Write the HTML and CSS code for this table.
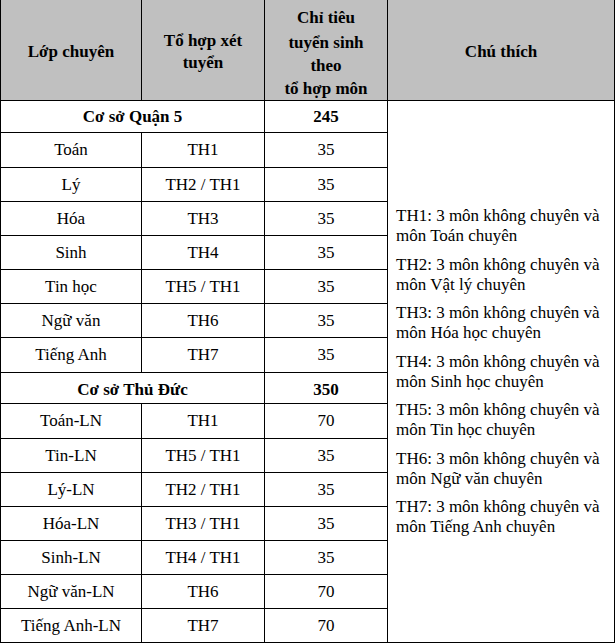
FILE: index.html
```html
<!DOCTYPE html>
<html lang="vi">
<head>
<meta charset="utf-8">
<link rel="stylesheet" href="styles.css">
</head>
<body>
<table class="quota">
  <colgroup>
    <col class="c1"><col class="c2"><col class="c3"><col class="c4">
  </colgroup>
  <thead>
    <tr class="head">
      <th>Lớp chuyên</th>
      <th>Tổ hợp xét<br>tuyển</th>
      <th class="multi"><span class="l">Chỉ tiêu</span><span class="l second">tuyển sinh</span><span class="l">theo</span><span class="l">tổ hợp môn</span></th>
      <th>Chú thích</th>
    </tr>
  </thead>
  <tbody>
    <tr class="group g1">
      <td colspan="2">Cơ sở Quận 5</td>
      <td>245</td>
      <td class="notes" rowspan="16">
        <p>TH1: 3 môn không chuyên và môn Toán chuyên</p>
        <p>TH2: 3 môn không chuyên và môn Vật lý chuyên</p>
        <p>TH3: 3 môn không chuyên và môn Hóa học chuyên</p>
        <p>TH4: 3 môn không chuyên và môn Sinh học chuyên</p>
        <p>TH5: 3 môn không chuyên và môn Tin học chuyên</p>
        <p>TH6: 3 môn không chuyên và môn Ngữ văn chuyên</p>
        <p>TH7: 3 môn không chuyên và môn Tiếng Anh chuyên</p>
      </td>
    </tr>
    <tr class="r35"><td>Toán</td><td>TH1</td><td>35</td></tr>
    <tr><td>Lý</td><td>TH2 / TH1</td><td>35</td></tr>
    <tr><td>Hóa</td><td>TH3</td><td>35</td></tr>
    <tr><td>Sinh</td><td>TH4</td><td>35</td></tr>
    <tr><td>Tin học</td><td>TH5 / TH1</td><td>35</td></tr>
    <tr><td>Ngữ văn</td><td>TH6</td><td>35</td></tr>
    <tr class="r35"><td>Tiếng Anh</td><td>TH7</td><td>35</td></tr>
    <tr class="group g2">
      <td colspan="2">Cơ sở Thủ Đức</td>
      <td>350</td>
    </tr>
    <tr class="r35"><td>Toán-LN</td><td>TH1</td><td>70</td></tr>
    <tr><td>Tin-LN</td><td>TH5 / TH1</td><td>35</td></tr>
    <tr><td>Lý-LN</td><td>TH2 / TH1</td><td>35</td></tr>
    <tr><td>Hóa-LN</td><td>TH3 / TH1</td><td>35</td></tr>
    <tr><td>Sinh-LN</td><td>TH4 / TH1</td><td>35</td></tr>
    <tr><td>Ngữ văn-LN</td><td>TH6</td><td>70</td></tr>
    <tr><td>Tiếng Anh-LN</td><td>TH7</td><td>70</td></tr>
  </tbody>
</table>
</body>
</html>
```

FILE: styles.css
```css
html, body {
  margin: 0;
  padding: 0;
  background: #ffffff;
}

body {
  font-family: "Liberation Serif", "Times New Roman", serif;
  color: #000000;
}

.quota {
  border-collapse: collapse;
  table-layout: fixed;
  width: 614px;
  font-family: "Liberation Serif", "Times New Roman", serif;
  font-size: 17px;
}

.c1 { width: 141px; }
.c2 { width: 123px; }
.c3 { width: 123px; }
.c4 { width: 227px; }

.quota th,
.quota td {
  border: 1px solid #000000;
  padding: 0 4px;
  text-align: center;
  vertical-align: middle;
  line-height: 22px;
  font-weight: normal;
}

.quota .head th {
  background: #c0c0c0;
  font-weight: bold;
  height: 95px;
  border-top: none;
  padding: 4px 2px 0 2px;
}

.quota .head th.multi {
  padding-top: 5px;
}

.multi .l {
  display: block;
  line-height: 23px;
}

.multi .l.second {
  margin-top: 2px;
}

.quota td {
  height: 33px;
}

.quota tr.r35 td {
  height: 34px;
}

.quota .group td {
  font-weight: bold;
}

.quota .g1 td {
  height: 31px;
}

.quota .g2 td {
  height: 27px;
  padding-top: 3px;
}

.quota .group td.notes,
.quota td.notes {
  text-align: left;
  padding: 0 8px;
  height: auto;
  font-weight: normal;
}

.notes p {
  margin: 0 0 8.5px 0;
  line-height: 20px;
}

.notes p:last-child {
  margin-bottom: 0;
}
```
